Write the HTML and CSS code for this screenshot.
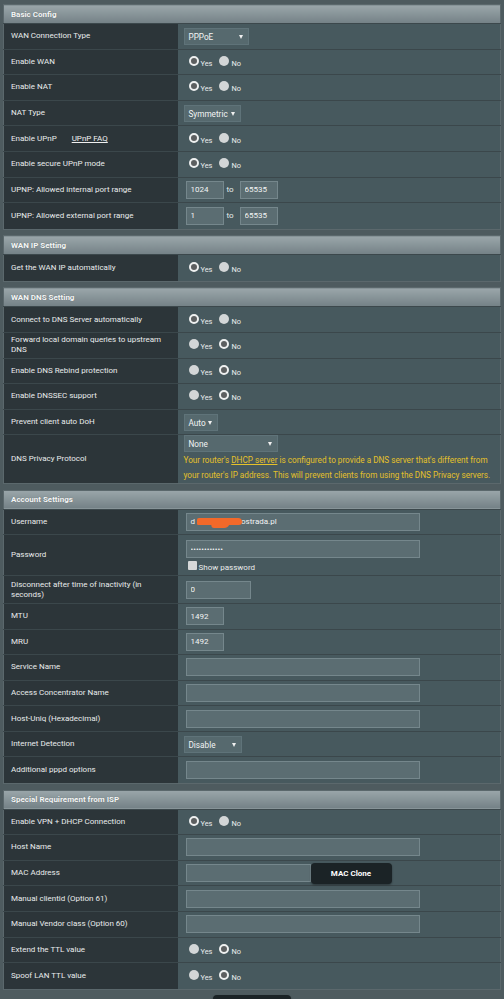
FILE: index.html
```html
<!DOCTYPE html>
<html lang="en">
<head>
    <meta charset="UTF-8">
    <meta name="viewport" content="width=device-width, initial-scale=1.0">
    <title>WAN - Internet Connection</title>
    <link rel="stylesheet" href="styles.css">
</head>
<body>

<div class="page">
    <table class="form-table">
        <colgroup><col class="col-label"><col></colgroup>
        <thead>
            <tr><th colspan="2">Basic Config</th></tr>
        </thead>
        <tbody>
            <tr>
                <td class="label">WAN Connection Type</td>
                <td class="value"><span class="select w-pppoe">PPPoE</span></td>
            </tr>
            <tr>
                <td class="label">Enable WAN</td>
                <td class="value">
                    <label class="radio"><input type="radio" name="wan" checked>Yes</label>
                    <label class="radio"><input type="radio" name="wan">No</label>
                </td>
            </tr>
            <tr>
                <td class="label">Enable NAT</td>
                <td class="value">
                    <label class="radio"><input type="radio" name="nat" checked>Yes</label>
                    <label class="radio"><input type="radio" name="nat">No</label>
                </td>
            </tr>
            <tr>
                <td class="label">NAT Type</td>
                <td class="value"><span class="select w-sym">Symmetric</span></td>
            </tr>
            <tr>
                <td class="label">Enable UPnP <a href="#" class="faq">UPnP FAQ</a></td>
                <td class="value">
                    <label class="radio"><input type="radio" name="upnp" checked>Yes</label>
                    <label class="radio"><input type="radio" name="upnp">No</label>
                </td>
            </tr>
            <tr>
                <td class="label">Enable secure UPnP mode</td>
                <td class="value">
                    <label class="radio"><input type="radio" name="supnp" checked>Yes</label>
                    <label class="radio"><input type="radio" name="supnp">No</label>
                </td>
            </tr>
            <tr>
                <td class="label">UPNP: Allowed internal port range</td>
                <td class="value">
                    <input class="text small" type="text" value="1024"><span class="to">to</span><input class="text small" type="text" value="65535">
                </td>
            </tr>
            <tr>
                <td class="label">UPNP: Allowed external port range</td>
                <td class="value">
                    <input class="text small" type="text" value="1"><span class="to">to</span><input class="text small" type="text" value="65535">
                </td>
            </tr>
        </tbody>
    </table>

    <table class="form-table">
        <colgroup><col class="col-label"><col></colgroup>
        <thead>
            <tr><th colspan="2">WAN IP Setting</th></tr>
        </thead>
        <tbody>
            <tr>
                <td class="label">Get the WAN IP automatically</td>
                <td class="value">
                    <label class="radio"><input type="radio" name="wanip" checked>Yes</label>
                    <label class="radio"><input type="radio" name="wanip">No</label>
                </td>
            </tr>
        </tbody>
    </table>

    <table class="form-table">
        <colgroup><col class="col-label"><col></colgroup>
        <thead>
            <tr><th colspan="2">WAN DNS Setting</th></tr>
        </thead>
        <tbody>
            <tr>
                <td class="label">Connect to DNS Server automatically</td>
                <td class="value">
                    <label class="radio"><input type="radio" name="dnsauto" checked>Yes</label>
                    <label class="radio"><input type="radio" name="dnsauto">No</label>
                </td>
            </tr>
            <tr>
                <td class="label">Forward local domain queries to upstream DNS</td>
                <td class="value">
                    <label class="radio"><input type="radio" name="fwd">Yes</label>
                    <label class="radio"><input type="radio" name="fwd" checked>No</label>
                </td>
            </tr>
            <tr>
                <td class="label">Enable DNS Rebind protection</td>
                <td class="value">
                    <label class="radio"><input type="radio" name="rebind">Yes</label>
                    <label class="radio"><input type="radio" name="rebind" checked>No</label>
                </td>
            </tr>
            <tr>
                <td class="label">Enable DNSSEC support</td>
                <td class="value">
                    <label class="radio"><input type="radio" name="dnssec">Yes</label>
                    <label class="radio"><input type="radio" name="dnssec" checked>No</label>
                </td>
            </tr>
            <tr>
                <td class="label">Prevent client auto DoH</td>
                <td class="value"><span class="select w-auto">Auto</span></td>
            </tr>
            <tr class="privacy-row">
                <td class="label">DNS Privacy Protocol</td>
                <td class="value">
                    <span class="select w-none">None</span>
                    <div class="hint">Your router's <a href="#">DHCP server</a> is configured to provide a DNS server that's different from your router's IP address. This will prevent clients from using the DNS Privacy servers.</div>
                </td>
            </tr>
        </tbody>
    </table>

    <table class="form-table">
        <colgroup><col class="col-label"><col></colgroup>
        <thead>
            <tr><th colspan="2">Account Settings</th></tr>
        </thead>
        <tbody>
            <tr>
                <td class="label">Username</td>
                <td class="value">
                    <span class="text wide fake-input"><span>d</span><span class="user-rest">ostrada.pl</span><span class="redact"></span></span>
                </td>
            </tr>
            <tr class="password-row">
                <td class="label">Password</td>
                <td class="value">
                    <input class="text wide" type="text" value="••••••••••••">
                    <label class="check"><input type="checkbox">Show password</label>
                </td>
            </tr>
            <tr class="idle-row">
                <td class="label">Disconnect after time of inactivity (in seconds)</td>
                <td class="value"><input class="text medium" type="text" value="0"></td>
            </tr>
            <tr>
                <td class="label">MTU</td>
                <td class="value"><input class="text small" type="text" value="1492"></td>
            </tr>
            <tr>
                <td class="label">MRU</td>
                <td class="value"><input class="text small" type="text" value="1492"></td>
            </tr>
            <tr>
                <td class="label">Service Name</td>
                <td class="value"><input class="text wide" type="text"></td>
            </tr>
            <tr>
                <td class="label">Access Concentrator Name</td>
                <td class="value"><input class="text wide" type="text"></td>
            </tr>
            <tr>
                <td class="label">Host-Uniq (Hexadecimal)</td>
                <td class="value"><input class="text wide" type="text"></td>
            </tr>
            <tr>
                <td class="label">Internet Detection</td>
                <td class="value"><span class="select w-disable">Disable</span></td>
            </tr>
            <tr>
                <td class="label">Additional pppd options</td>
                <td class="value"><input class="text wide" type="text"></td>
            </tr>
        </tbody>
    </table>

    <table class="form-table">
        <colgroup><col class="col-label"><col></colgroup>
        <thead>
            <tr><th colspan="2">Special Requirement from ISP</th></tr>
        </thead>
        <tbody>
            <tr>
                <td class="label">Enable VPN + DHCP Connection</td>
                <td class="value">
                    <label class="radio"><input type="radio" name="vpn" checked>Yes</label>
                    <label class="radio"><input type="radio" name="vpn">No</label>
                </td>
            </tr>
            <tr>
                <td class="label">Host Name</td>
                <td class="value"><input class="text wide" type="text"></td>
            </tr>
            <tr>
                <td class="label">MAC Address</td>
                <td class="value">
                    <div class="mac-wrap">
                        <input class="text mac" type="text"><button class="btn-dark mac-clone">MAC Clone</button>
                    </div>
                </td>
            </tr>
            <tr>
                <td class="label">Manual clientid (Option 61)</td>
                <td class="value"><input class="text wide" type="text"></td>
            </tr>
            <tr>
                <td class="label">Manual Vendor class (Option 60)</td>
                <td class="value"><input class="text wide" type="text"></td>
            </tr>
            <tr>
                <td class="label">Extend the TTL value</td>
                <td class="value">
                    <label class="radio"><input type="radio" name="ttl">Yes</label>
                    <label class="radio"><input type="radio" name="ttl" checked>No</label>
                </td>
            </tr>
            <tr>
                <td class="label">Spoof LAN TTL value</td>
                <td class="value">
                    <label class="radio"><input type="radio" name="spoof">Yes</label>
                    <label class="radio"><input type="radio" name="spoof" checked>No</label>
                </td>
            </tr>
        </tbody>
    </table>

    <div class="apply">
        <button class="btn-dark apply-btn">Apply</button>
    </div>
</div>

</body>
</html>
```

FILE: styles.css
```css
body {
    margin: 0;
    background-color: #4e5b5f;
    font-family: 'Roboto', 'Liberation Sans', sans-serif;
    font-size: 8px;
    color: #e9ecec;
}

.page {
    padding: 4px 3px 0 3px;
}

.form-table {
    width: 100%;
    border-collapse: collapse;
    table-layout: fixed;
    margin-bottom: 5.5px;
    border: 1px solid #5b686c;
}

.col-label {
    width: 174px;
}

.form-table th {
    height: 18px;
    padding: 0 0 0 7px;
    text-align: left;
    font-weight: bold;
    font-size: 8px;
    color: #f4f6f6;
    background: linear-gradient(to bottom, #9aa6aa, #748186);
    border-bottom: 1px solid #3c484c;
    text-shadow: 0 0 1px rgba(0, 0, 0, 0.3);
}

.form-table td {
    height: 24.6px;
    padding: 0;
    border-bottom: 1px solid #3b474b;
    vertical-align: middle;
}

.form-table tbody tr:last-child td {
    border-bottom: none;
    height: 25.6px;
}

.label {
    padding: 0 8px 0 7px !important;
    background-color: #2c3539;
    line-height: 10px;
}

.value {
    background-color: #47595e;
    padding-left: 6px !important;
}

.faq {
    color: #f0f0f0;
    margin-left: 13px;
    text-decoration: underline;
}

/* selects */
.select {
    display: inline-block;
    position: relative;
    height: 17px;
    line-height: 16px;
    padding-left: 4px;
    box-sizing: border-box;
    background-color: #56696e;
    border: 1px solid #5f7379;
    color: #f2f4f4;
    font-size: 8.2px;
    vertical-align: middle;
}

.select::after {
    content: "";
    position: absolute;
    right: 5px;
    top: 6px;
    border-left: 2.5px solid transparent;
    border-right: 2.5px solid transparent;
    border-top: 4px solid #f0f0f0;
}

.w-pppoe { width: 65px; }
.w-sym { width: 57px; }
.w-auto { width: 34px; }
.w-none { width: 94px; }
.w-disable { width: 58px; }

/* radios */
.radio {
    display: inline-block;
    margin-left: 5px;
    margin-right: 0;
    font-size: 7.4px;
    vertical-align: middle;
}

.radio input {
    appearance: none;
    -webkit-appearance: none;
    width: 10px;
    height: 10px;
    margin: 0 2px 0 0;
    border-radius: 50%;
    background-color: #d3d6d7;
    vertical-align: 0;
    box-sizing: border-box;
}

.radio input:checked {
    background-color: #5c5f60;
    border: 2.5px solid #eef0f0;
}

/* text inputs */
.text {
    height: 18px;
    box-sizing: border-box;
    background-color: #5b6d72;
    border: 1px solid #75878c;
    color: #f2f4f4;
    font-family: 'Roboto', 'Liberation Sans', sans-serif;
    font-size: 8px;
    padding: 0 4px;
    margin-left: 2px;
    vertical-align: middle;
    outline: none;
}

.text.small { width: 38px; }
.text.medium { width: 65px; }
.text.wide { width: 234px; }
.text.mac { width: 125px; }

.to {
    margin: 0 4px 0 3px;
    vertical-align: middle;
}

.fake-input {
    display: inline-block;
    position: relative;
    line-height: 16px;
}

.user-rest {
    margin-left: 46px;
}

.redact {
    position: absolute;
    left: 10px;
    top: 4px;
    width: 45px;
    height: 7px;
    background-color: #f2692a;
    border-radius: 3px 6px 5px 2px;
}

.redact::after {
    content: "";
    position: absolute;
    left: 14px;
    top: 5px;
    width: 18px;
    height: 5px;
    background-color: #f2692a;
    border-radius: 0 0 4px 4px;
    transform: skewX(-20deg);
}

.password-row td {
    height: 40px;
}

.password-row .text {
    display: block;
    margin-top: 2px;
}

.check {
    display: block;
    margin: 3px 0 0 4px;
    font-size: 8px;
}

.check input {
    appearance: none;
    -webkit-appearance: none;
    width: 9px;
    height: 9px;
    margin: 0 2px 0 0;
    background-color: #d6d8d9;
    border-radius: 1px;
    vertical-align: 0;
}

.idle-row td {
    height: 26.5px;
}

.privacy-row td {
    height: 50px;
}

.hint {
    color: #e5c12a;
    font-size: 8.2px;
    line-height: 15px;
    margin-top: 1px;
}

.hint a {
    color: #e5c12a;
    text-decoration: underline;
}

.mac-wrap {
    display: flex;
    align-items: center;
}

.btn-dark {
    background-color: #1b2326;
    color: #fff;
    border: none;
    border-radius: 4px;
    font-family: 'Roboto', 'Liberation Sans', sans-serif;
    font-weight: bold;
    font-size: 8px;
    box-shadow: 0 1px 2px rgba(0, 0, 0, 0.4);
}

.mac-clone {
    width: 81px;
    height: 21px;
    margin-left: 0;
}

.apply {
    display: flex;
    justify-content: center;
}

.apply-btn {
    width: 78px;
    height: 24px;
}
```
